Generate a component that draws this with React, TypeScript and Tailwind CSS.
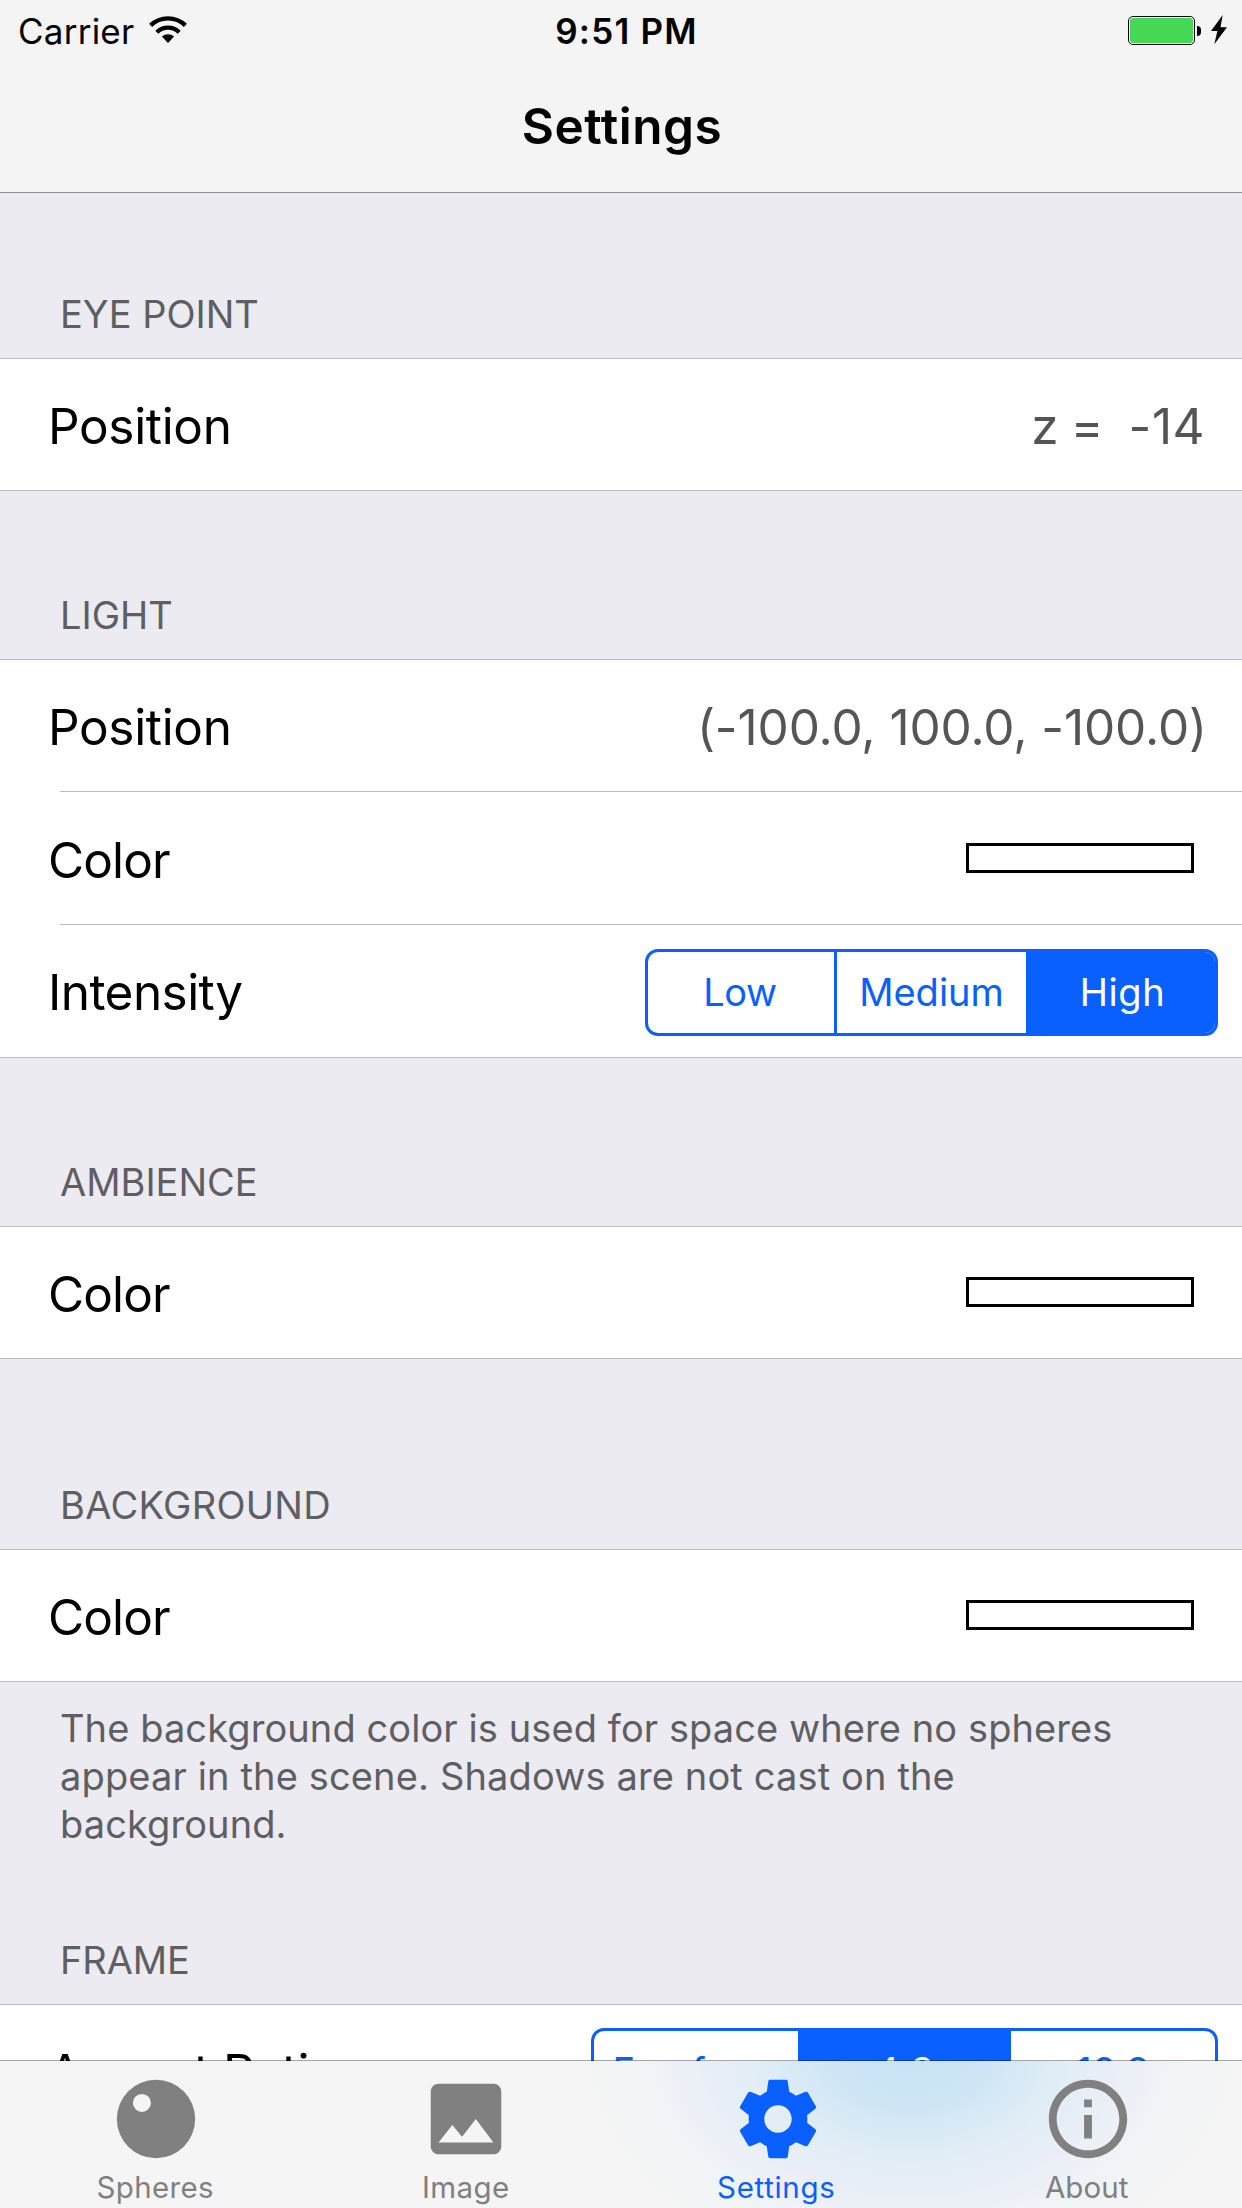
import type { ReactNode } from "react";

function WifiIcon() {
  return (
    <svg width="38" height="28" viewBox="0 0 38 28" fill="none" stroke="#000">
      <path d="M1.6 9.4A25 25 0 0 1 36.4 9.4" strokeWidth="4.4" />
      <path d="M7.8 16.3A15.9 15.9 0 0 1 30.2 16.3" strokeWidth="4.3" />
      <path d="M19 27L12.9 20.6A8.9 8.9 0 0 1 25.1 20.6Z" fill="#000" stroke="none" />
    </svg>
  );
}

function StatusBar() {
  return (
    <div className="grid h-[60px] grid-cols-[1fr_auto_1fr] text-[35px] leading-[62px]">
      <div className="flex items-start pl-[18px]">
        <span className="tracking-[0.24px]">Carrier</span>
        <span className="mt-4 ml-[15px]">
          <WifiIcon />
        </span>
      </div>
      <div className="pl-[11px] font-semibold tracking-[1.2px]">9:51 PM</div>
      <div className="flex items-start justify-end pt-4 pr-[15px]">
        <div className="h-[29px] w-[67px] rounded-[5px] border border-black bg-white p-px">
          <div className="h-full rounded-[3px] bg-[#46d754]" />
        </div>
        <div className="mt-[10px] ml-[2px] h-[10px] w-[4px] rounded-r-full bg-black" />
        <svg className="-mt-px ml-[10px]" width="16" height="30" viewBox="0 0 16 30">
          <path d="M11.7 0L0 16H6.4L3.3 29.3L16 12.3H9.5Z" />
        </svg>
      </div>
    </div>
  );
}

function SectionHeader({ className, children }: { className: string; children: ReactNode }) {
  return (
    <h2 className={`flex items-end pb-5 pl-[60px] text-[38px] leading-[48px] text-[#5f5e63] ${className}`}>
      {children}
    </h2>
  );
}

function Group({ children }: { children: ReactNode }) {
  return <div className="border-y border-[#bbbbc0] bg-white">{children}</div>;
}

function Divider() {
  return <div className="ml-[60px] border-t border-[#bbbbc0]" />;
}

function Row({ label, labelClass, className, children }: { label: string; labelClass: string; className: string; children: ReactNode }) {
  return (
    <div className={`flex items-center justify-between ${className}`}>
      <span className={`text-[49.5px] leading-[60px] ${labelClass}`}>{label}</span>
      {children}
    </div>
  );
}

function Swatch({ className = "" }: { className?: string }) {
  return <div className={`mr-12 h-[30px] w-[228px] border-3 border-black bg-white ${className}`} />;
}

function Segmented({ className, children }: { className: string; children: ReactNode }) {
  return (
    <div className={`mr-6 flex h-[87px] overflow-hidden rounded-[13px] border-3 border-[#0a60ff] bg-white text-center text-[38px] leading-[81px] text-[#0a60ff] ${className}`}>
      {children}
    </div>
  );
}

const tabs = [
  {
    label: "Spheres",
    color: "text-[#808080] tracking-[0.32px]",
    iconClass: "ml-px",
    path: "M12 2a10 10 0 1 0 0 20a10 10 0 1 0 0-20zM8.4 5.6a2.3 2.3 0 1 1 0 4.6a2.3 2.3 0 1 1 0-4.6z",
  },
  {
    label: "Image",
    color: "text-[#808080] tracking-[0.4px]",
    iconClass: "",
    path: "M21 19V5c0-1.1-.9-2-2-2H5c-1.1 0-2 .9-2 2v14c0 1.1.9 2 2 2h14c1.1 0 2-.9 2-2zM8.5 13.5l2.5 3.01L14.5 12l4.5 6H5l3.5-4.5z",
  },
  {
    label: "Settings",
    color: "text-[#0a60ff] tracking-[0.68px]",
    iconClass: "ml-[3px]",
    path: "M19.43 12.98c.04-.32.07-.64.07-.98s-.03-.66-.07-.98l2.11-1.65c.19-.15.24-.42.12-.64l-2-3.46c-.12-.22-.39-.3-.61-.22l-2.49 1c-.52-.4-1.08-.73-1.69-.98l-.38-2.65C14.46 2.18 14.25 2 14 2h-4c-.25 0-.46.18-.49.42l-.38 2.65c-.61.25-1.17.59-1.69.98l-2.49-1c-.23-.09-.49 0-.61.22l-2 3.46c-.13.22-.07.49.12.64l2.11 1.65c-.04.32-.07.65-.07.98s.03.66.07.98l-2.11 1.65c-.19.15-.24.42-.12.64l2 3.46c.12.22.39.3.61.22l2.49-1c.52.4 1.08.73 1.69.98l.38 2.65c.03.24.24.42.49.42h4c.25 0 .46-.18.49-.42l.38-2.65c.61-.25 1.17-.59 1.69-.98l2.49 1c.23.09.49 0 .61-.22l2-3.46c.12-.22.07-.49-.12-.64l-2.11-1.65zM12 15.5c-1.93 0-3.5-1.57-3.5-3.5s1.57-3.5 3.5-3.5 3.5 1.57 3.5 3.5-1.57 3.5-3.5 3.5z",
  },
  {
    label: "About",
    color: "text-[#808080] tracking-[0.11px]",
    iconClass: "ml-[2px]",
    path: "M11 17h2v-6h-2v6zm1-15C6.48 2 2 6.48 2 12s4.480 10 10 10 10-4.480 10-10S17.520 2 12 2zm0 18c-4.410 0-8-3.590-8-8s3.590-8 8-8 8 3.590 8 8-3.590 8-8 8zM11 9h2V7h-2v2z",
  },
];

function TabBar() {
  return (
    <nav className="relative -mt-px grid h-[148px] shrink-0 grid-cols-4 border-t border-black/35">
      {tabs.map((tab) => (
        <div key={tab.label} className={`z-10 flex flex-col items-center pt-[11px] ${tab.color}`}>
          <svg className={tab.iconClass} width="94" height="94" viewBox="0 0 24 24" fill="currentColor" fillRule="evenodd">
            <path d={tab.path} />
          </svg>
          <span className="mt-[3px] text-[29.5px] leading-[36px]">{tab.label}</span>
        </div>
      ))}
      <div className="absolute inset-0 bg-[#f5f5f5] bg-[radial-gradient(ellipse_330px_230px_at_910px_-10px,#c6e3f5_0%,#cfe6f6_25%,#e0edf6_45%,#ebeff7_65%,#f1f4f6_82%,#f5f5f5_100%)]" />
    </nav>
  );
}

export default function App() {
  return (
    <div className="flex h-[2208px] w-[1242px] flex-col overflow-hidden bg-[#ebebf1] font-['Inter',sans-serif] text-black">
      <header className="h-[193px] shrink-0 border-b border-[#929197] bg-[#f4f4f4]">
        <StatusBar />
        <h1 className="mt-9 pl-[2px] text-center text-[49.5px] leading-[60px] font-semibold tracking-[0.5px]">Settings</h1>
      </header>

      <main className="min-h-0 flex-1 overflow-hidden">
        <SectionHeader className="h-[165px]">EYE POINT</SectionHeader>
        <Group>
          <Row label="Position" labelClass="pt-[3px] pl-12 tracking-[-0.33px]" className="h-[131px]">
            <span className="flex pt-[3px] pr-[37px] text-[49.5px] leading-[60px] text-[#555]">
              <span className="tracking-[-0.9px] whitespace-pre">{"z =  "}</span>
              <span className="tracking-[0.5px]">-14</span>
            </span>
          </Row>
        </Group>

        <SectionHeader className="h-[168px]">LIGHT</SectionHeader>
        <Group>
          <Row label="Position" labelClass="pt-[3px] pl-12 tracking-[-0.33px]" className="h-[131px]">
            <span className="pt-[3px] pr-[35px] text-[49.5px] leading-[60px] tracking-[-0.09px] text-[#555]">(-100.0, 100.0, -100.0)</span>
          </Row>
          <Divider />
          <Row label="Color" labelClass="pt-[3px] pl-12 tracking-[-0.9px]" className="h-[132px]">
            <Swatch />
          </Row>
          <Divider />
          <Row label="Intensity" labelClass="pt-px pl-12 tracking-[-0.55px]" className="h-[132px]">
            <Segmented className="mt-[3px]">
              <span className="w-[189px] border-r-3 border-[#0a60ff] pr-[2px] tracking-[-0.4px]">Low</span>
              <span className="w-[189px]">Medium</span>
              <span className="w-[189px] bg-[#0a60ff] pl-1 tracking-[0.6px] text-white">High</span>
            </Segmented>
          </Row>
        </Group>

        <SectionHeader className="h-[168px]">AMBIENCE</SectionHeader>
        <Group>
          <Row label="Color" labelClass="pt-[3px] pl-12 tracking-[-0.9px]" className="h-[131px]">
            <Swatch className="mb-[2px]" />
          </Row>
        </Group>

        <SectionHeader className="h-[190px] tracking-[0.3px]">BACKGROUND</SectionHeader>
        <Group>
          <Row label="Color" labelClass="pt-[3px] pl-12 tracking-[-0.9px]" className="h-[131px]">
            <Swatch className="mb-[2px]" />
          </Row>
        </Group>
        <p className="pt-[22px] pr-[100px] pl-[60px] text-[38px] leading-[48px] tracking-[0.09px] text-[#5f5e63]">
          The background color is used for space where no spheres
          <br />
          <span className="tracking-[0.14px]">appear in the scene. Shadows are not cast on the</span>
          <br />
          background.
        </p>

        <SectionHeader className="h-[156px] tracking-[-0.1px]">FRAME</SectionHeader>
        <Group>
          <Row label="Aspect Ratio" labelClass="pt-[3px] pl-12 tracking-[-0.4px]" className="h-[131px]">
            <Segmented className="mt-px">
              <span className="w-[204px] pr-1">Freeform</span>
              <span className="w-[213px] bg-[#0a60ff] text-white">4:3</span>
              <span className="w-[204px]">16:9</span>
            </Segmented>
          </Row>
        </Group>
      </main>

      <TabBar />
    </div>
  );
}
